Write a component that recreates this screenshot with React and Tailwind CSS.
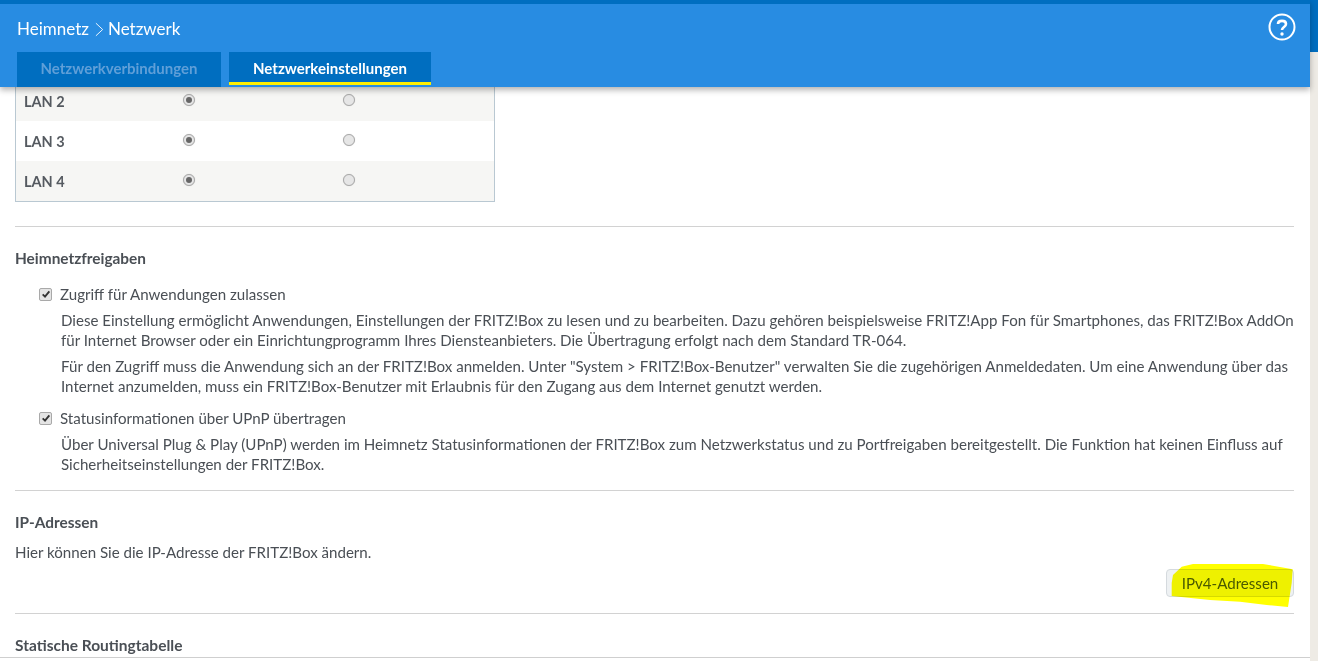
import React from "react";

const Radio = ({ checked }) => (
  <span className="flex h-[12px] w-[12px] items-center justify-center rounded-full border border-[#a9a9a9] bg-[#e6e6e6] shadow-[0_0_1px_rgba(0,0,0,0.2)]">
    {checked && <span className="h-[6px] w-[6px] rounded-full bg-[#666]" />}
  </span>
);

const Check = () => (
  <span className="flex h-[13px] w-[13px] shrink-0 items-center justify-center rounded-[2px] border border-[#a9a9a9] bg-[#e4e4e4]">
    <svg viewBox="0 0 12 12" className="h-[10px] w-[10px]">
      <path d="M2 6.5 L4.8 9.2 L10 2.8" fill="none" stroke="#333" strokeWidth="2.2" />
    </svg>
  </span>
);

const LanRow = ({ name, alt, rowClass, labelClass, radioClass }) => (
  <div className={`flex ${rowClass} ${alt ? "bg-[#f6f6f4]" : "bg-white"}`}>
    <div className={`w-[167px] pl-[8px] text-[14.5px] font-bold text-[#555a60] ${labelClass}`}>{name}</div>
    <div className={`w-[160px] ${radioClass}`}><Radio checked /></div>
    <div className={radioClass}><Radio /></div>
  </div>
);

export default function App() {
  return (
    <div className="flex h-[661px] w-[1318px] overflow-hidden bg-white font-['Lato','Noto_Sans',sans-serif] text-[15.1px] leading-[20px] text-[#4a4f55]">
      <div className="flex min-w-0 flex-1 flex-col">
        {/* header */}
        <div className="relative z-10 flex h-[87px] shrink-0 flex-col border-t-[4px] border-[#006ec0] bg-[#288ce2] shadow-[0_3px_6px_rgba(0,0,0,0.3)]">
          <div className="flex h-[48px] items-center justify-between pl-[17px] pr-[14px]">
            <div className="flex items-center pt-[2px] text-[17px] text-white">
              <span>Heimnetz</span>
              <svg viewBox="0 0 10 16" className="ml-[6px] mr-[4px] h-[15px] w-[9px]">
                <path d="M1 1 L8.5 8 L1 15" fill="none" stroke="white" strokeWidth="1" />
              </svg>
              <span>Netzwerk</span>
            </div>
            <svg viewBox="0 0 28 28" className="-mt-[2px] h-[28px] w-[28px]">
              <circle cx="14" cy="14" r="12.5" fill="none" stroke="white" strokeWidth="2" />
              <path d="M10 11 C10 6.8 18 6.8 18 11 C18 14 14 14 14 17" fill="none" stroke="white" strokeWidth="2.6" />
              <circle cx="14" cy="21" r="1.7" fill="white" />
            </svg>
          </div>
          <div className="flex h-[35px] gap-[8px] pl-[17px] text-center text-[15px] font-bold">
            <div className="w-[204px] bg-[#006ec0] pt-[6px] text-[#5f9fd8]">Netzwerkverbindungen</div>
            <div className="h-[33px] w-[202px] border-b-[3px] border-[#ffee00] bg-[#006ec0] pt-[6px] text-white">Netzwerkeinstellungen</div>
          </div>
        </div>

        {/* content */}
        <div className="min-h-0 flex-1 pb-[3px]">
          <div className="relative h-full overflow-hidden border-b border-[#cfcfcf] pl-[15px] pr-[16px]">
            <div className="w-[480px] border-x border-b border-[#b9c8d2]">
              <LanRow name="LAN 2" alt rowClass="h-[34px]" labelClass="pt-[5px]" radioClass="pt-[7px]" />
              <LanRow name="LAN 3" rowClass="h-[40px]" labelClass="pt-[11px]" radioClass="pt-[13px]" />
              <LanRow name="LAN 4" alt rowClass="h-[40px]" labelClass="pt-[11px]" radioClass="pt-[13px]" />
            </div>
            <div className="mt-[24px] border-t border-[#d2d2d2] pt-[21px]">
              <div className="text-[15.4px] font-bold">Heimnetzfreigaben</div>
              <div className="mt-[16px] flex items-center gap-[8px] pl-[24px]">
                <Check />
                <span>Zugriff für Anwendungen zulassen</span>
              </div>
              <div className="pl-[46px] pt-[6px]">
                <p>Diese Einstellung ermöglicht Anwendungen, Einstellungen der FRITZ!Box zu lesen und zu bearbeiten. Dazu gehören beispielsweise FRITZ!App Fon für Smartphones, das FRITZ!Box AddOn für Internet Browser oder ein Einrichtungprogramm Ihres Diensteanbieters. Die Übertragung erfolgt nach dem Standard TR-064.</p>
                <p className="mt-[6px]">Für den Zugriff muss die Anwendung sich an der FRITZ!Box anmelden. Unter "System &gt; FRITZ!Box-Benutzer" verwalten Sie die zugehörigen Anmeldedaten. Um eine Anwendung über das Internet anzumelden, muss ein FRITZ!Box-Benutzer mit Erlaubnis für den Zugang aus dem Internet genutzt werden.</p>
              </div>
              <div className="mt-[12px] flex items-center gap-[8px] pl-[24px]">
                <Check />
                <span>Statusinformationen über UPnP übertragen</span>
              </div>
              <p className="pl-[46px] pt-[6px]">Über Universal Plug &amp; Play (UPnP) werden im Heimnetz Statusinformationen der FRITZ!Box zum Netzwerkstatus und zu Portfreigaben bereitgestellt. Die Funktion hat keinen Einfluss auf Sicherheitseinstellungen der FRITZ!Box.</p>
            </div>
            <div className="mt-[16px] border-t border-[#d2d2d2] pt-[21px]">
              <div className="text-[15.4px] font-bold">IP-Adressen</div>
              <p className="mt-[10px]">Hier können Sie die IP-Adresse der FRITZ!Box ändern.</p>
              <div className="mt-[7px] flex justify-end">
                <button className="h-[28px] w-[128px] rounded-[4px] border border-[#d5dade] bg-[#eef1f3] text-[#4a5a70]">IPv4-Adressen</button>
              </div>
            </div>
            <div className="mt-[16px] border-t border-[#d2d2d2] pt-[21px] text-[15.5px] font-bold">Statische Routingtabelle</div>

            {/* marker highlight */}
            <svg viewBox="0 0 130 48" className="pointer-events-none absolute left-[1166px] top-[476px] h-[48px] w-[130px] mix-blend-multiply">
              <path d="M5.7 20 L7 12 L15.7 3.7 L27 1 L97 1 L126.7 6.3 L125.7 20 L122 44 L100.7 42 L74 38.7 L44 37 L5.7 33 Z" fill="#ffff00" />
            </svg>
          </div>
        </div>
      </div>

      {/* scrollbar strip */}
      <div className="flex w-[8px] shrink-0 flex-col bg-[#eeebe5]">
        <div className="h-[52px] bg-[#006ec0]" />
      </div>
    </div>
  );
}
